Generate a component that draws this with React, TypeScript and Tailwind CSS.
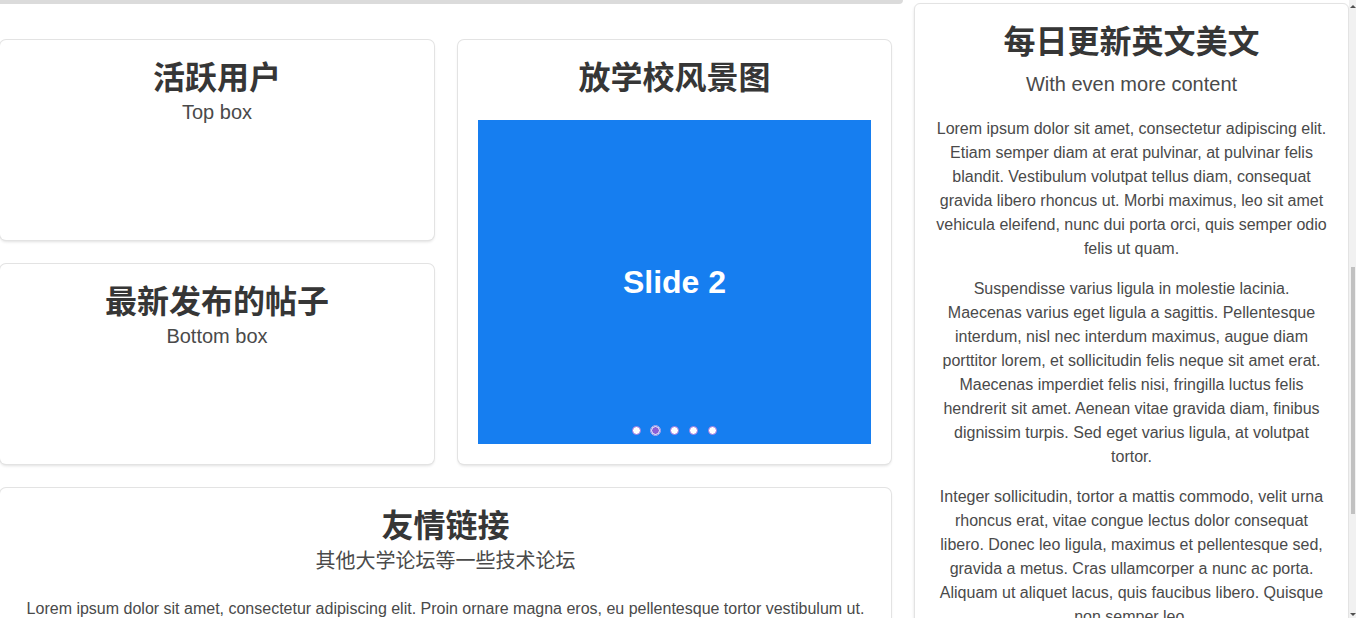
import React from 'react';

const font = "font-['Liberation_Sans','Noto_Sans_CJK_SC',sans-serif]";
const box = 'rounded-md bg-white p-5 shadow-[0_0_0_1px_#e3e3e3,0_2px_3px_rgba(10,10,10,0.12)]';

const Title = ({ children }: { children: React.ReactNode }) => (
  <h1 className="text-center text-[32px] font-bold leading-[36px] text-[#363636]">{children}</h1>
);

const Subtitle = ({ children, className = '' }: { children: React.ReactNode; className?: string }) => (
  <p className={'text-center text-[20px] leading-[25px] text-[#4a4a4a] ' + className}>{children}</p>
);

const SmallBox = ({ title, sub }: { title: string; sub: string }) => (
  <div className={box + ' h-[200px]'}>
    <Title>{title}</Title>
    <Subtitle className="mt-[4px]">{sub}</Subtitle>
  </div>
);

const Carousel = () => {
  const active = 1;
  return (
    <div className="relative mt-6 flex h-[324px] items-center justify-center bg-[#167ef0]">
      <span className="text-[32px] font-bold text-white">Slide 2</span>
      {/* dots */}
      <div className="absolute bottom-[9px] left-0 right-0 flex justify-center gap-[10px]">
        {[0, 1, 2, 3, 4].map((i) => (
          <span
            key={i}
            className={
              i === active
                ? 'h-[9px] w-[9px] rounded-full border-[1.5px] border-white bg-[#8a5fd6] outline outline-1 outline-[#b9a4ea]'
                : 'h-[9px] w-[9px] rounded-full border border-[#9a74e0] bg-white'
            }
          />
        ))}
      </div>
    </div>
  );
};

const rightParas = [
  'Lorem ipsum dolor sit amet, consectetur adipiscing elit. Etiam semper diam at erat pulvinar, at pulvinar felis blandit. Vestibulum volutpat tellus diam, consequat gravida libero rhoncus ut. Morbi maximus, leo sit amet vehicula eleifend, nunc dui porta orci, quis semper odio felis ut quam.',
  'Suspendisse varius ligula in molestie lacinia. Maecenas varius eget ligula a sagittis. Pellentesque interdum, nisl nec interdum maximus, augue diam porttitor lorem, et sollicitudin felis neque sit amet erat. Maecenas imperdiet felis nisi, fringilla luctus felis hendrerit sit amet. Aenean vitae gravida diam, finibus dignissim turpis. Sed eget varius ligula, at volutpat tortor.',
  'Integer sollicitudin, tortor a mattis commodo, velit urna rhoncus erat, vitae congue lectus dolor consequat libero. Donec leo ligula, maximus et pellentesque sed, gravida a metus. Cras ullamcorper a nunc ac porta. Aliquam ut aliquet lacus, quis faucibus libero. Quisque non semper leo.',
];

const Scrollbar = () => (
  <div className="flex w-[7px] flex-col items-center bg-[#f1f1f1]">
    <span className="mt-[5px] h-0 w-0 border-x-[3px] border-b-[3px] border-x-transparent border-b-[#505050]" />
    <div className="mt-[259px] h-[247px] w-[4px] bg-[#c1c1c1]" />
    <span className="mt-auto mb-[2px] h-0 w-0 border-x-[3px] border-t-[3px] border-x-transparent border-t-[#505050]" />
  </div>
);

export default function App() {
  return (
    <div className={font + ' flex h-[618px] w-[1356px] overflow-hidden bg-white'}>
      <div className="flex w-[1349px] items-start gap-[23px]">
        {/* left area */}
        <div className="w-[891px] shrink-0">
          <div className="h-[4px] w-[903px] rounded-br-[4px] bg-[#dbdbdb]" />
          <div className="mt-[36px] flex gap-6">
            <div className="flex w-[434px] flex-col gap-6">
              <SmallBox title="活跃用户" sub="Top box" />
              <SmallBox title="最新发布的帖子" sub="Bottom box" />
            </div>
            <div className={box + ' h-[424px] flex-1'}>
              <Title>放学校风景图</Title>
              <Carousel />
            </div>
          </div>
          <div className={box + ' mt-6'}>
            <Title>友情链接</Title>
            <Subtitle className="mt-[5px]">其他大学论坛等一些技术论坛</Subtitle>
            <p className="mt-[23px] text-center text-[16px] leading-[24px] text-[#4a4a4a]">
              Lorem ipsum dolor sit amet, consectetur adipiscing elit. Proin ornare magna eros, eu pellentesque tortor
              vestibulum ut. Maecenas non massa sem. Etiam finibus odio quis feugiat facilisis.
            </p>
          </div>
        </div>

        {/* right area */}
        <div className="mt-[3px] w-[435px] shrink-0 rounded-md border border-[#e3e3e3] bg-white p-5 shadow-[0_2px_3px_rgba(10,10,10,0.12)]">
          <Title>每日更新英文美文</Title>
          <Subtitle className="mt-[12px]">With even more content</Subtitle>
          <div className="mt-[20px] flex flex-col gap-4">
            {rightParas.map((p) => (
              <p key={p.slice(0, 12)} className="text-center text-[16px] leading-[24px] text-[#4a4a4a]">
                {p}
              </p>
            ))}
          </div>
        </div>
      </div>
      <Scrollbar />
    </div>
  );
}
